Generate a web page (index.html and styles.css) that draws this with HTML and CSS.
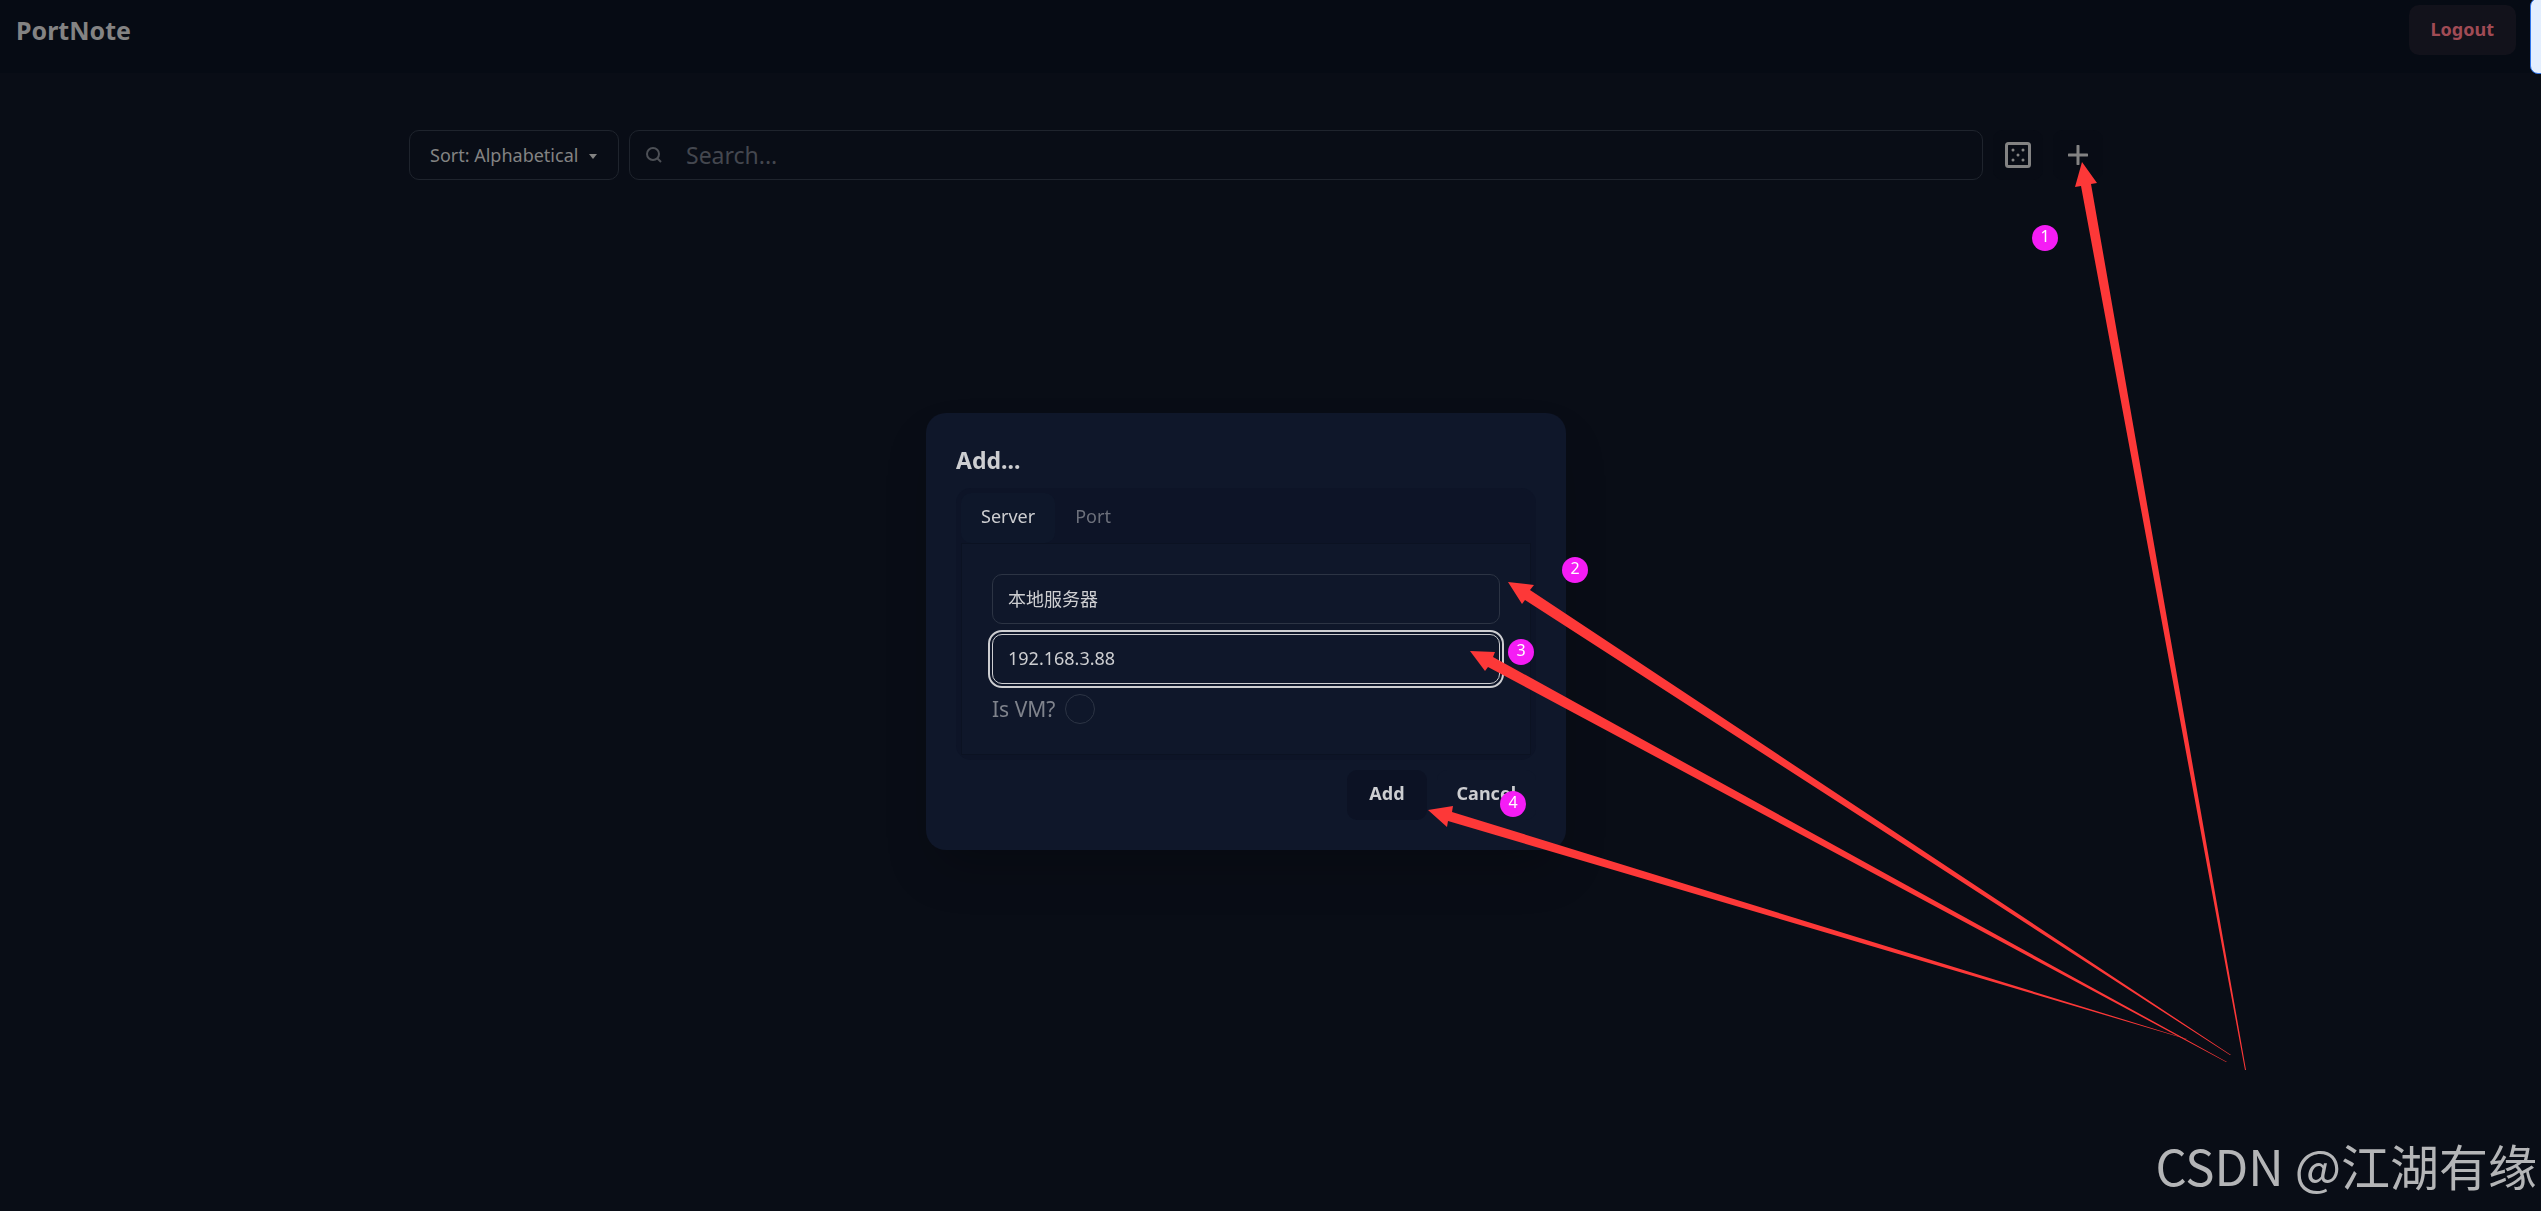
FILE: index.html
```html
<!DOCTYPE html>
<html lang="en">
<head>
    <meta charset="UTF-8">
    <title>PortNote</title>
    <link rel="stylesheet" href="styles.css">
</head>
<body>
    <header class="navbar">
        <a class="brand" href="#">PortNote</a>
        <button class="btn btn-logout" type="button">Logout</button>
        <div class="side-tab"></div>
    </header>

    <main class="content">
        <div class="toolbar">
            <div class="sort">
                <select class="sort-select" aria-label="Sort">
                    <option>Sort: Alphabetical</option>
                </select>
                <svg class="caret" viewBox="0 0 8 5"><path d="M0 0h8L4 5z"/></svg>
            </div>
            <label class="search">
                <svg class="search-icon" viewBox="0 0 16 16"><circle cx="7" cy="7" r="6"/><path d="M11.5 11.5 15 15"/></svg>
                <input type="search" placeholder="Search..." aria-label="Search">
            </label>
            <button class="btn btn-icon" type="button" aria-label="Random port">
                <svg class="icon-dice" viewBox="0 0 26 26">
                    <rect x="1.5" y="1.5" width="23" height="23" rx="2"/>
                    <path d="M8 8h.01M18 8h.01M13 13h.01M8 18h.01M18 18h.01"/>
                </svg>
            </button>
            <button class="btn btn-icon" type="button" aria-label="Add">
                <svg class="icon-plus" viewBox="0 0 20 20"><path d="M10 1v18M1 10h18"/></svg>
            </button>
        </div>
    </main>

    <div class="modal">
        <form class="modal-box" role="dialog" aria-labelledby="modalTitle">
            <h3 class="modal-title" id="modalTitle">Add...</h3>
            <div class="tabs">
                <div class="tab-list" role="tablist">
                    <button class="tab tab-active" type="button" role="tab" aria-selected="true">Server</button>
                    <button class="tab" type="button" role="tab" aria-selected="false">Port</button>
                </div>
                <div class="tab-content" role="tabpanel">
                    <input class="input" type="text" value="本地服务器" aria-label="Name">
                    <input class="input input-focus" type="text" value="192.168.3.88" aria-label="IP">
                    <div class="vm-row">
                        <label for="isVm">Is VM?</label>
                        <input class="checkbox" type="checkbox" id="isVm">
                    </div>
                </div>
            </div>
            <div class="modal-action">
                <button class="btn btn-add" type="button">Add</button>
                <button class="btn btn-cancel" type="button">Cancel</button>
            </div>
        </form>
    </div>

    <!-- step arrows and numbers -->
    <svg class="notes" width="2541" height="1211" viewBox="0 0 2541 1211">
        <g class="arrows">
            <path d="M2082 162 2075 187 2081 186 2245 1070 2246 1070 2091 184 2097 183z"/>
            <path d="M1508 582 1534 585 1530 590 2231 1055 2230 1055 1525 600 1522 604z"/>
            <path d="M1470 651 1495 652 1493 657 2227 1062 2226 1062 1488 667 1485 671z"/>
            <path d="M1428 810 1453 806 1452 812 2187 1039 2186 1039 1448 821 1447 827z"/>
        </g>
        <g class="dots">
            <circle cx="2045" cy="238" r="13"/>
            <circle cx="1575" cy="570" r="13"/>
            <circle cx="1521" cy="652" r="13"/>
            <circle cx="1513" cy="804" r="13"/>
        </g>
        <g class="numbers">
            <text x="2045" y="242">1</text>
            <text x="1575" y="574">2</text>
            <text x="1521" y="656">3</text>
            <text x="1513" y="808">4</text>
        </g>
    </svg>
    <div class="watermark">CSDN @江湖有缘</div>
</body>
</html>
```
FILE: styles.css
```css
* {
    box-sizing: border-box;
}

body {
    margin: 0;
    min-height: 100vh;
    overflow: hidden;
    background-color: #090d16;
    color: #838383;
    font-family: "Noto Sans", "Noto Sans CJK SC", sans-serif;
    font-size: 18px;
}

button, input, select {
    font: inherit;
    color: inherit;
}

.navbar {
    position: relative;
    display: flex;
    justify-content: space-between;
    align-items: flex-start;
    height: 73px;
    padding: 5px 25px 0 16px;
    background-color: #060b14;
}

.brand {
    color: #838383;
    font-size: 25px;
    font-weight: bold;
    line-height: 50px;
    text-decoration: none;
}

.side-tab {
    position: absolute;
    top: -2px;
    right: -8px;
    width: 19px;
    height: 76px;
    border: 1px solid #2f74e8;
    border-radius: 8px;
    background-color: #e3eefe;
}

.btn {
    height: 50px;
    padding: 0 20px 3px;
    border: 0;
    border-radius: 10px;
    font-weight: bold;
}

.btn-logout {
    padding: 0 22px 2px;
    background-color: #12121b;
    color: #a04b55;
}

.content {
    display: flex;
    justify-content: center;
    padding: 57px 29px 0 0;
}

.toolbar {
    display: flex;
    gap: 10px;
    width: 66.667vw;
}

.sort {
    position: relative;
}

.sort-select {
    width: 210px;
    height: 50px;
    padding: 0 20px;
    appearance: none;
    border: 1px solid #1f242d;
    border-radius: 10px;
    background: transparent;
    font-size: 18px;
}

.caret {
    position: absolute;
    top: 24px;
    right: 22px;
    width: 8px;
    height: 5px;
    fill: #838383;
}

.search {
    display: flex;
    flex: 1;
    align-items: center;
    gap: 24px;
    height: 50px;
    padding: 0 16px;
    border: 1px solid #1f242d;
    border-radius: 10px;
}

.search input {
    flex: 1;
    padding: 0;
    border: 0;
    outline: 0;
    background: transparent;
    font-size: 23px;
}

.search input::placeholder {
    color: #44474f;
}

.search-icon {
    width: 16px;
    height: 16px;
    fill: none;
    stroke: #4d5056;
    stroke-width: 2;
}

.btn-icon {
    display: flex;
    align-items: center;
    justify-content: center;
    width: 50px;
    padding: 0;
    background-color: #080c15;
}

.btn-icon svg {
    fill: none;
    stroke: #838383;
    stroke-width: 3;
    stroke-linecap: round;
}

.icon-dice {
    width: 26px;
    height: 26px;
}

.icon-plus {
    width: 20px;
    height: 20px;
}

.modal {
    position: fixed;
    inset: 0;
    display: flex;
    align-items: center;
    justify-content: center;
    padding: 51px 49px 0 0;
    color: #cdced1;
}

.modal-box {
    width: 640px;
    padding: 30px;
    border-radius: 20px;
    background-color: #0f172a;
    box-shadow: 0 25px 50px -12px rgba(0, 0, 0, 0.25);
}

.modal-title {
    margin: 0 0 10px;
    font-size: 23px;
    line-height: 35px;
}

.tabs {
    padding: 5px;
    border-radius: 15px;
    background-color: #0d1427;
}

.tab-list {
    display: flex;
}

.tab {
    height: 50px;
    padding: 0 20px 3px;
    border: 0;
    border-radius: 10px;
    background: transparent;
    color: #6c707b;
}

.tab-active {
    background-color: #0e172a;
    color: #cdced1;
}

.tab-content {
    display: flex;
    flex-direction: column;
    gap: 10px;
    padding: 30px;
    border: 1px solid #0b1222;
    background-color: #0f172a;
}

.input {
    width: 100%;
    height: 50px;
    padding: 0 15px 1px;
    border: 1px solid #2c3444;
    border-radius: 10px;
    background: transparent;
    outline: 0;
}

.input-focus {
    border-color: #cdced1;
    outline: 2px solid #cdced1;
    outline-offset: 2px;
}

.vm-row {
    display: flex;
    align-items: center;
    gap: 10px;
    height: 30px;
    color: #7f838c;
    font-size: 21px;
}

.checkbox {
    width: 30px;
    height: 30px;
    margin: 0;
    appearance: none;
    border: 1px solid #2c3444;
    border-radius: 50%;
}

.modal-action {
    display: flex;
    justify-content: flex-end;
    gap: 10px;
    margin-top: 10px;
}

.btn-add {
    padding: 0 22px 3px;
    background-color: #0c1224;
}

.btn-cancel {
    background-color: #0f172a;
}

.notes {
    position: absolute;
    top: 0;
    left: 0;
    pointer-events: none;
}

.arrows {
    fill: #fd3838;
}

.dots {
    fill: #f51cf5;
}

.numbers {
    fill: #fff;
    font-family: "Noto Sans", sans-serif;
    font-size: 16px;
    text-anchor: middle;
}

.watermark {
    position: absolute;
    right: 4px;
    bottom: 10px;
    color: #b4b5b7;
    font-family: "Noto Sans CJK SC", sans-serif;
    font-size: 49px;
    line-height: 72px;
}
```
